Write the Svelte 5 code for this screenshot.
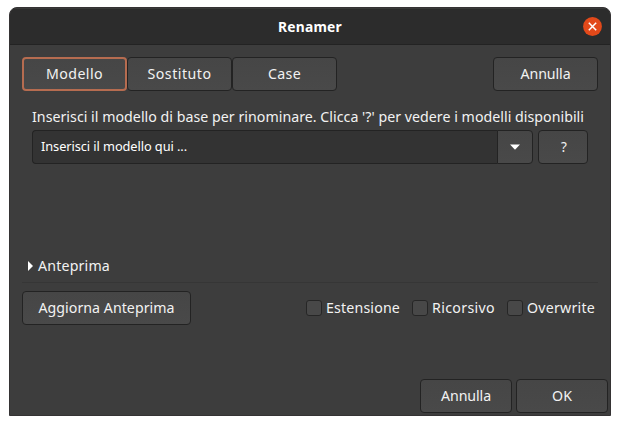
<script>
  const tabs = [
    { label: 'Modello', width: 57, active: true },
    { label: 'Sostituto', width: 64 },
    { label: 'Case', width: 33 }
  ];
  const options = [
    { label: 'Estensione', width: 74, box: 106 },
    { label: 'Ricorsivo', width: 63, box: 95 },
    { label: 'Overwrite', width: 68, box: 91 }
  ];

  // Tracks a label out or in so that its advance equals the given width.
  function fit(node, width) {
    const natural = node.getBoundingClientRect().width;
    node.style.letterSpacing = `${(width - natural) / node.textContent.length}px`;
  }
</script>

<main class="window">
  <header>
    <h1><span use:fit={64}>Renamer</span></h1>
    <button class="close" aria-label="Chiudi">
      <svg width="19" height="19" viewBox="0 0 19 19">
        <circle cx="9.5" cy="9.5" r="9.4" fill="#e2491a" />
        <path d="M5.8 5.8l7.4 7.4M13.2 5.8l-7.4 7.4" stroke="#fff" stroke-width="1.5" />
      </svg>
    </button>
  </header>

  <nav>
    {#each tabs as tab}
      <button class="btn tab" class:active={tab.active}><span use:fit={tab.width}>{tab.label}</span></button>
    {/each}
    <button class="btn tab cancel"><span use:fit={50}>Annulla</span></button>
  </nav>

  <section class="pattern">
    <p><span use:fit={552}>Inserisci il modello di base per rinominare. Clicca '?' per vedere i modelli disponibili</span></p>
    <div class="row">
      <div class="combo">
        <div class="entry"><span use:fit={146}>Inserisci il modello qui ...</span></div>
        <button class="btn drop" aria-label="Apri">
          <svg width="10" height="6" viewBox="0 0 10 6"><path d="M0 .5h10L5 5.7z" fill="#fff" /></svg>
        </button>
      </div>
      <button class="btn help">?</button>
    </div>
  </section>

  <div class="expander">
    <svg width="5" height="10" viewBox="0 0 5 10"><path d="M0 0L5 5L0 10z" fill="#fff" /></svg>
    <span use:fit={72}>Anteprima</span>
  </div>
  <div class="rule"></div>

  <section class="update">
    <button class="btn refresh"><span use:fit={136}>Aggiorna Anteprima</span></button>
    <div class="checks">
      {#each options as option}
        <div class="check" style:width="{option.box}px">
          <i></i><span use:fit={option.width}>{option.label}</span>
        </div>
      {/each}
    </div>
  </section>

  <footer>
    <button class="btn"><span use:fit={50}>Annulla</span></button>
    <button class="btn"><span use:fit={20}>OK</span></button>
  </footer>
</main>

<style>
  :global(body) { background: #fff; }
  :global(#app) { display: flow-root; }
  * { box-sizing: border-box; }
  .window {
    width: 602px;
    height: 409px;
    margin: 7px 0 0 9px;
    overflow: hidden;
    border: 1px solid #353334;
    border-radius: 8px 8px 0 0;
    background: #3d3d3d;
    color: #f2f2f2;
    font: 14.2px/20px "Noto Sans", sans-serif;
  }
  span { display: inline-block; white-space: nowrap; }
  header {
    height: 37px;
    display: flex;
    align-items: center;
    justify-content: center;
    position: relative;
    background: #2c2c2c;
    border-top: 1px solid #393939;
    border-bottom: 1px solid #232323;
  }
  h1 { margin: 1px 0 0; font-size: 13.8px; line-height: 20px; font-weight: 700; color: #fff; }
  .close {
    position: absolute;
    right: 8.5px;
    top: 7.5px;
    padding: 0;
    border: 0;
    background: none;
    line-height: 0;
  }
  .btn {
    height: 34px;
    padding: 0 0 1px;
    display: flex;
    align-items: center;
    justify-content: center;
    border: 1px solid #232323;
    border-radius: 4px;
    background: linear-gradient(#464646, #494949);
    color: inherit;
    font: inherit;
  }
  nav { display: flex; padding: 12px 12px 0; }
  .tab { width: 105px; }
  .tab.active { border: 2px solid #b66c50; }
  .cancel { margin-left: auto; }
  .pattern { padding: 16px 22px 0; }
  p { margin: 0; height: 23px; }
  .row { display: flex; gap: 5px; }
  .combo { display: flex; width: 501px; }
  .entry {
    flex: 1;
    height: 34px;
    padding: 5px 0 0 8px;
    border: 1px solid #232323;
    border-right: 0;
    border-radius: 4px 0 0 4px;
    background: #333;
    color: #fff;
    font-size: 12.8px;
  }
  .drop { width: 36px; padding: 0; border-radius: 0 4px 4px 0; }
  .help { width: 50px; font-size: 13.5px; padding-left: 2px; }
  .expander { display: flex; align-items: center; gap: 5px; height: 20px; margin: 92px 0 0 18px; }
  .rule { height: 1px; margin: 6px 12px 0; background: #363636; }
  .update { display: flex; justify-content: space-between; padding: 8px 12px 0; }
  .refresh { width: 169px; }
  .checks { display: flex; align-items: center; }
  .check { display: flex; align-items: center; gap: 4px; }
  .check span { margin-top: -1px; }
  .check i {
    flex: none;
    width: 16px;
    height: 16px;
    border: 1px solid #262626;
    border-radius: 3px;
    background: #484848;
  }
  footer { display: flex; justify-content: flex-end; gap: 4px; padding: 54px 2px 0; }
  footer .btn { width: 92px; }
</style>
